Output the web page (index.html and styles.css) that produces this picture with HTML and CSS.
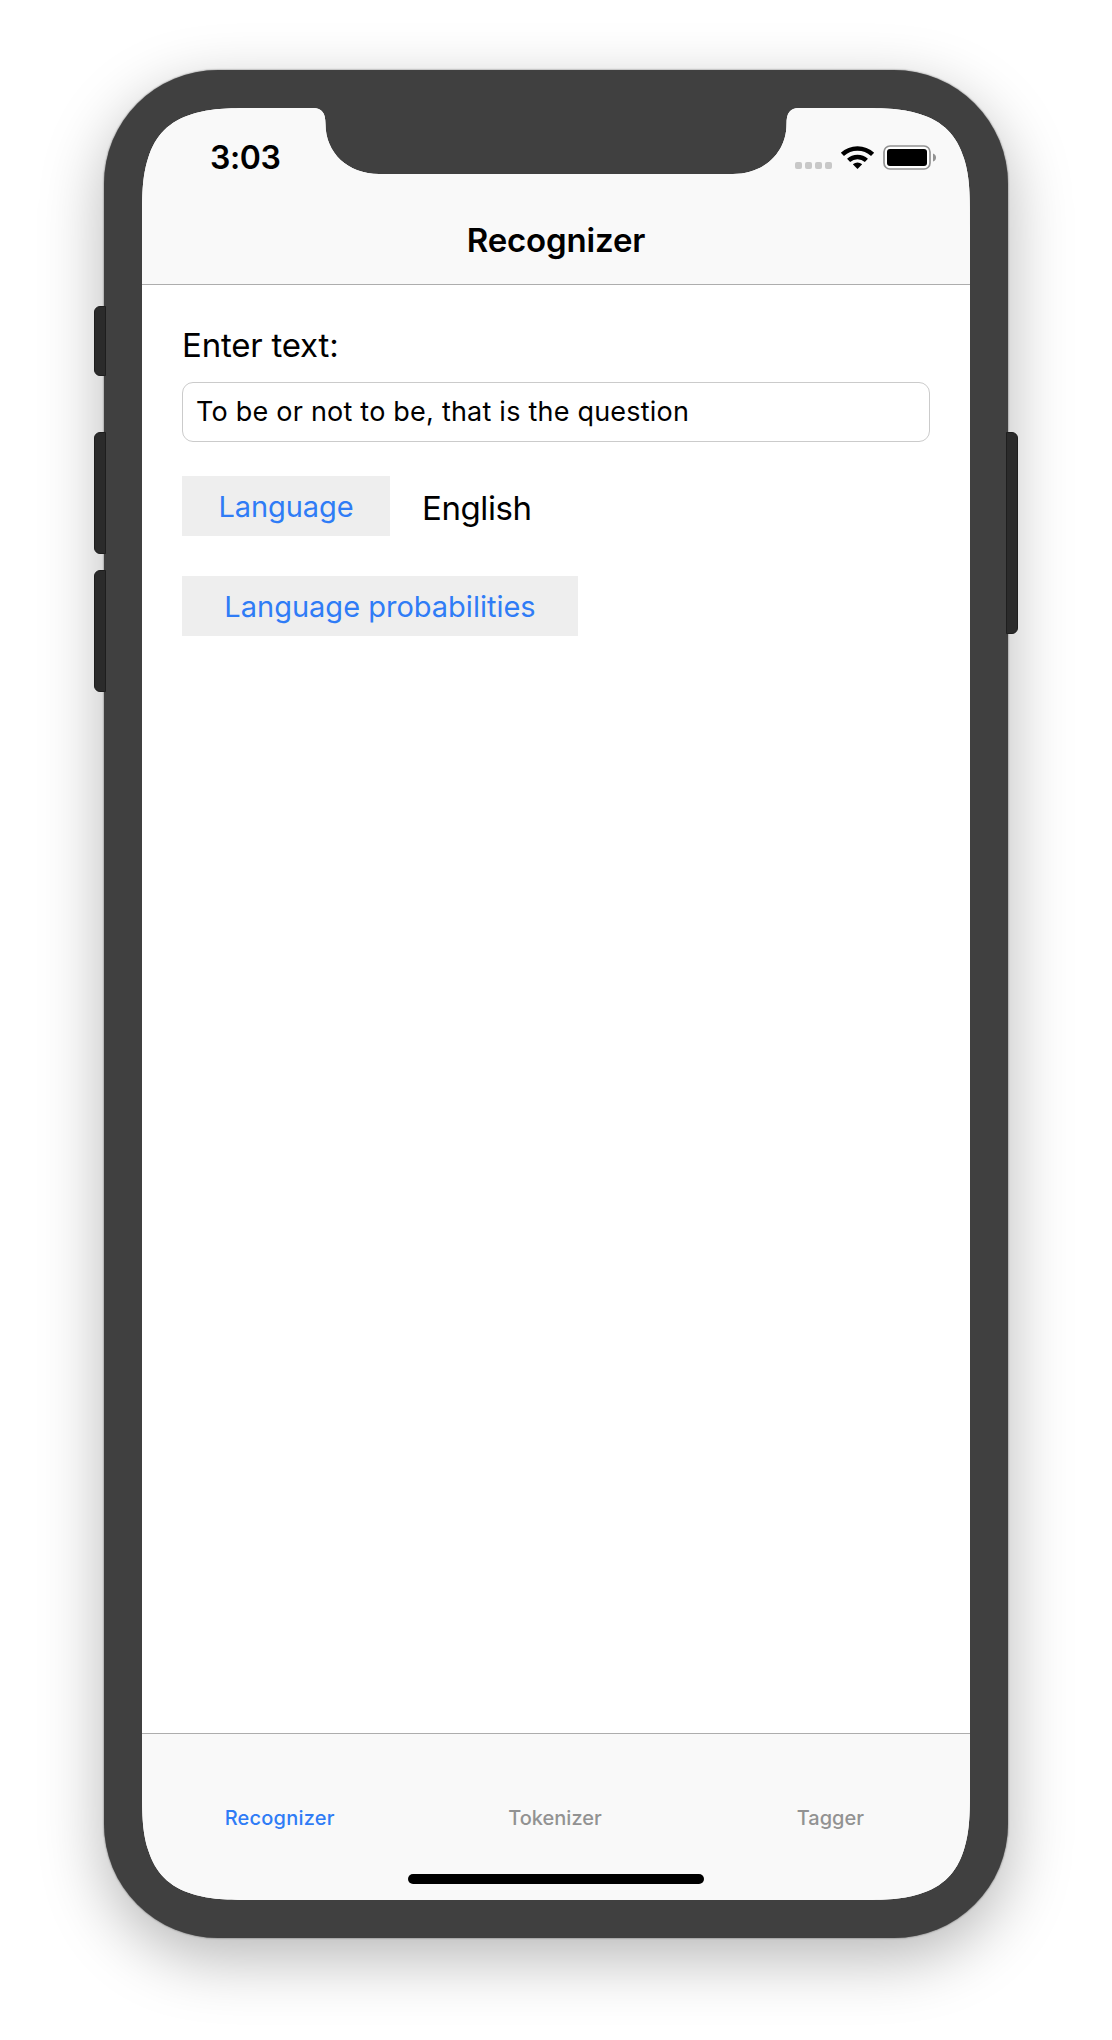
FILE: index.html
```html
<!DOCTYPE html>
<html lang="en">
<head>
<meta charset="utf-8">
<title>Recognizer</title>
<link rel="stylesheet" href="styles.css">
</head>
<body>
<div class="device">
  <span class="key key-mute"></span>
  <span class="key key-up"></span>
  <span class="key key-down"></span>
  <span class="key key-power"></span>
  <div class="screen">
    <header class="top">
      <div class="status">
        <span class="time">3:03</span>
        <svg class="indicators" width="142" height="26" viewBox="0 0 142 26">
          <g fill="#c8c8c8">
            <rect x="0" y="17" width="7" height="7" rx="2"/><rect x="10" y="17" width="7" height="7" rx="2"/><rect x="20" y="17" width="7" height="7" rx="2"/><rect x="30" y="17" width="7" height="7" rx="2"/>
          </g>
          <g fill="none" stroke="#000" stroke-width="4.6">
            <path d="M47.4 9.4A22.2 22.2 0 0 1 77.6 9.4"/>
            <path d="M53.6 15.4A13.2 13.2 0 0 1 71.4 15.4"/>
          </g>
          <path d="M62.5 24L57.8 19.3Q62.5 15.6 67.2 19.3Z"/>
          <rect x="89" y="1" width="46" height="23" rx="6" fill="#fff" stroke="#929292" stroke-width="1.7"/>
          <rect x="92" y="4" width="40" height="17" rx="3"/>
          <path d="M138 8.500Q141 9.500 141 12.500T138 16.500Z" fill="#929292"/>
        </svg>
      </div>
      <h1 class="title">Recognizer</h1>
    </header>
    <main class="content">
      <label class="label" for="entry">Enter text:</label>
      <input class="entry" id="entry" value="To be or not to be, that is the question">
      <div class="row">
        <button class="btn btn-language">Language</button>
        <output class="result">English</output>
      </div>
      <button class="btn btn-prob">Language probabilities</button>
    </main>
    <nav class="tabs">
      <a class="tab active">Recognizer</a>
      <a class="tab">Tokenizer</a>
      <a class="tab">Tagger</a>
    </nav>
    <span class="home"></span>
  </div>
</div>
</body>
</html>
```
FILE: styles.css
```css
* { box-sizing: border-box; }
body { margin: 0; background: #fff; color: #000; font-family: Inter, "Liberation Sans", sans-serif; height: 2040px; overflow: hidden; padding: 70px 104px 0; }
.device { position: relative; width: 904px; height: 1868px; padding: 38px; border-radius: 114px; background: #404040; box-shadow: 0 0 2px rgba(0,0,0,.6), 0 20px 64px rgba(0,0,0,.285); }
.key { position: absolute; width: 12px; background: #2b2b2b; border: 1px solid #1e1e1e; border-radius: 6px 0 0 6px; left: -10px; }
.key-mute { top: 236px; height: 70px; }
.key-up { top: 362px; height: 122px; }
.key-down { top: 500px; height: 122px; }
.key-power { top: 362px; height: 202px; left: auto; right: -10px; border-radius: 0 6px 6px 0; }
.screen { position: relative; width: 828px; height: 1792px; display: flex; flex-direction: column; background: #fff;
  clip-path: path("M0 122C0 87 0 69.500 6 50.500C13.500 26.800 26.800 13.500 50.500 6C69.500 0 87 0 122 0L171 0C180 0 183.500 5 183.500 16C183.500 45 206 66 237 66L591 66C622 66 644.500 45 644.500 16C644.500 5 648 0 657 0L706 0C741 0 758.500 0 777.500 6C801.200 13.500 814.500 26.800 822 50.500C828 69.500 828 87 828 122L828 1670C828 1705 828 1722.500 822 1741.500C814.500 1765.200 801.200 1778.500 777.500 1786C758.500 1792 741 1792 706 1792L122 1792C87 1792 69.500 1792 50.500 1786C26.800 1778.500 13.500 1765.200 6 1741.500C0 1722.500 0 1705 0 1670Z"); }
.top { height: 177px; flex: none; background: #f9f9f9; border-bottom: 1px solid #adadad; }
.status { height: 88px; display: flex; justify-content: space-between; padding: 37px 33px 0 68px; }
.time { font-size: 32px; font-weight: 600; line-height: 26px; letter-spacing: -.4px; }
.title { margin: 0; font-size: 33px; font-weight: 600; line-height: 88px; text-align: center; letter-spacing: -.15px; }
.content { flex: 1; display: flex; flex-direction: column; align-items: flex-start; padding: 40px 40px 0; }
.label { font-size: 33px; line-height: 40px; margin-bottom: 17px; letter-spacing: -.2px; }
.entry { width: 748px; height: 60px; padding: 0 13px 2px; border: 1px solid #cbcbcb; border-radius: 11px; background: #fff; font: 400 27px Inter, sans-serif; color: #000; margin-bottom: 34px; letter-spacing: .22px; }
.row { display: flex; align-items: center; gap: 32px; margin-bottom: 40px; }
.btn { height: 60px; padding: 0; border: 0; background: #eee; color: #2f7cf6; font: 400 29px Inter, sans-serif; }
.btn-language { width: 208px; letter-spacing: -.1px; }
.btn-prob { width: 396px; }
.result { font-size: 33px; letter-spacing: -.4px; padding-top: 4px; }
.tabs { height: 167px; display: flex; background: #f9f9f9; border-top: 1px solid #adadad; padding-right: 2px; }
.tab { flex: 1; text-align: center; font-size: 20px; font-weight: 500; line-height: 24px; padding-top: 72px; color: #929292; }
.active { color: #2f7cf6; letter-spacing: .2px; }
.home { position: absolute; left: 266px; bottom: 16px; width: 296px; height: 10px; border-radius: 5px; background: #000; }
```
